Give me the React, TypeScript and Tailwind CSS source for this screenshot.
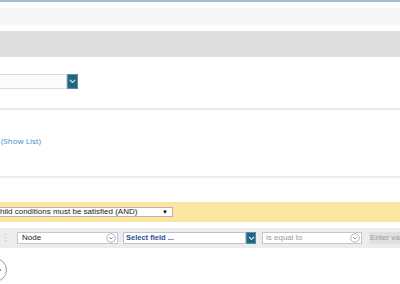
import React from "react";

function CircleChevron() {
  return (
    <svg width="10" height="10" viewBox="0 0 10 10" className="shrink-0">
      <circle cx="5" cy="5" r="4.3" fill="#fff" stroke="#8fa6c4" strokeWidth="0.8" />
      <path d="M3.2 4.2 L5 6 L6.8 4.2" fill="none" stroke="#6d8bb3" strokeWidth="0.9" />
    </svg>
  );
}

function BlueBtn({ w, h }: { w: number; h: number }) {
  return (
    <div
      className="shrink-0 flex items-center justify-center bg-[#1f6885] border border-[#5b8da3]"
      style={{ width: w, height: h }}
    >
      <svg width="7" height="5" viewBox="0 0 7 5">
        <path d="M1 1 L3.5 3.5 L6 1" fill="none" stroke="#d8e6ee" strokeWidth="1.1" />
      </svg>
    </div>
  );
}

export default function App() {
  return (
    <div
      className="w-[400px] h-[284px] bg-white overflow-hidden relative"
      style={{ fontFamily: '"Liberation Sans", Arial, sans-serif' }}
    >
      <div className="h-[2px] bg-[#a9bcd3]" />
      <div className="h-[6px]" />
      <div className="h-[17px] bg-[#f7f7f7]" />
      <div className="h-[6px]" />
      <div className="h-[26px] bg-[#dedede]" />
      <div className="h-[17px]" />
      <div className="flex h-[15px]">
        <div className="shrink-0 w-[67px] h-full bg-[#fbfbfb] border-y border-r border-[#dcdcdc]" />
        <BlueBtn w={11} h={15} />
      </div>
      <div className="h-[19px]" />
      <div className="h-[2px] bg-[#e8e8e8]" />
      <div className="h-[24px]" />
      <div
        className="h-[14px] text-[8px] leading-[14px] text-[#3a8cc2] pl-[1px]"
        style={{ fontFamily: '"Open Sans", sans-serif' }}
      >
        (Show List)
      </div>
      <div className="h-[28px]" />
      <div className="h-[2px] bg-[#ececec]" />
      <div className="h-[24px]" />
      <div className="h-[20px] bg-[#fde6a2] flex items-center">
        <div className="shrink-0 w-[173px] h-[10px] bg-white border border-[#b5b5b5] border-l-0 flex items-center justify-between pr-[4px] text-[8px] leading-none text-[#222] whitespace-nowrap">
          <span>hild conditions must be satisfied (AND)</span>
          <span className="text-[6px] text-black">▼</span>
        </div>
      </div>
      <div className="h-[6px]" />
      <div className="h-[20px] bg-[#ececec] flex items-center whitespace-nowrap">
        <div className="shrink-0 w-[17px] pl-[1px] text-[#b8b8b8] text-[9px] leading-none">⋮</div>
        <div className="shrink-0 w-[101px] h-[12px] bg-white border border-[#c8c8c8] flex items-center justify-between pl-[4px] pr-[1px] text-[8px] leading-none text-[#222]">
          <span>Node</span>
          <CircleChevron />
        </div>
        <div className="shrink-0 w-[5px]" />
        <div className="shrink-0 flex h-[12px]">
          <div className="w-[123px] h-full bg-white border border-[#b9c4d3] flex items-center pl-[2px] text-[7.5px] leading-none font-bold text-[#2a4f98]">
            Select field ...
          </div>
          <BlueBtn w={10} h={12} />
        </div>
        <div className="shrink-0 w-[6px]" />
        <div className="shrink-0 w-[100px] h-[12px] bg-white border border-[#c8c8c8] flex items-center justify-between pl-[3px] pr-[1px] text-[8px] leading-none text-[#9a9a9a]">
          <span>is equal to</span>
          <CircleChevron />
        </div>
        <div className="shrink-0 w-[7px]" />
        <div className="shrink-0 h-[12px] bg-[#e0e0e0] pl-[1px] flex items-center text-[8px] leading-none text-[#9a9a9a]">
          Enter value
        </div>
      </div>
      <div className="absolute left-[-17px] top-[258px] w-[24px] h-[24px] rounded-full border border-[#9a9a9a]" />
      <div className="absolute left-0 top-[269px] w-[1px] h-[2px] bg-[#6da0c8]" />
    </div>
  );
}
